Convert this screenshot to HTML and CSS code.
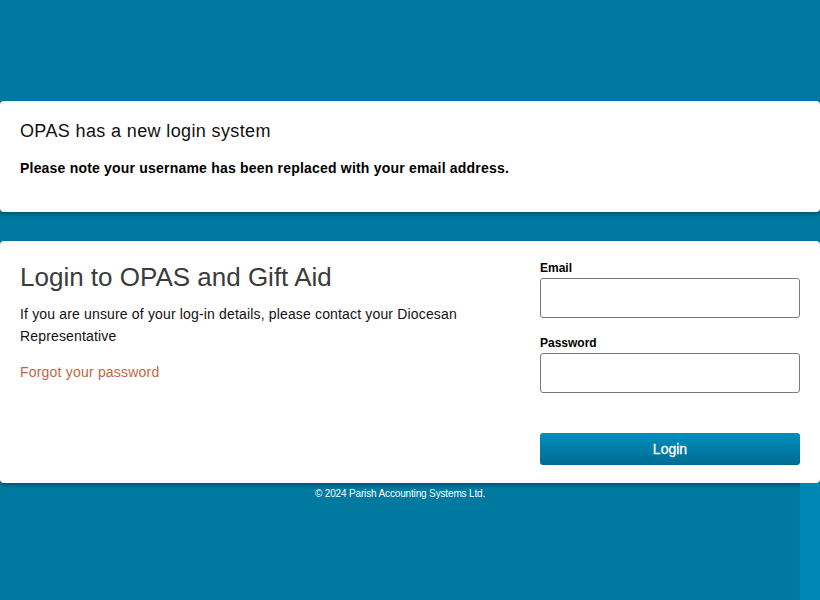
FILE: index.html
```html
<!DOCTYPE html>
<html lang="en">
<head>
<meta charset="utf-8">
<title>OPAS Login</title>
<link rel="stylesheet" href="styles.css">
</head>
<body>
<div class="page">
  <section class="card notice">
    <h2 class="notice-title">OPAS has a new login system</h2>
    <p class="notice-text">Please note your username has been replaced with your email address.</p>
  </section>
  <section class="card login">
    <div class="login-info">
      <h1 class="login-title">Login to OPAS and Gift Aid</h1>
      <p class="login-text">If you are unsure of your log-in details, please contact your Diocesan Representative</p>
      <a class="forgot" href="#">Forgot your password</a>
    </div>
    <form class="login-form">
      <label class="field-label" for="email">Email</label>
      <input class="field-input" id="email" type="email">
      <label class="field-label pw" for="password">Password</label>
      <input class="field-input" id="password" type="password">
      <button class="login-btn" type="button">Login</button>
    </form>
  </section>
  <div class="bottom">
    <footer class="footer">© 2024 Parish Accounting Systems Ltd.</footer>
    <div class="strip"></div>
  </div>
</div>
</body>
</html>
```

FILE: styles.css
```css
html, body {
  margin: 0;
  padding: 0;
  height: 100%;
}
body {
  background: #0079a1;
  font-family: "Liberation Sans", Arial, sans-serif;
  color: #000;
}
.page {
  display: flex;
  flex-direction: column;
  min-height: 100%;
  padding-top: 101px;
  box-sizing: border-box;
}
.card {
  background: #fff;
  border-radius: 4px;
  box-shadow: 0 2px 4px rgba(0, 0, 0, 0.35);
}
.notice {
  padding: 20px 20px 20px;
  height: 111px;
  box-sizing: border-box;
}
.notice-title {
  margin: 0;
  font-size: 18px;
  font-weight: normal;
  line-height: 20px;
  color: #111;
  letter-spacing: 0.37px;
}
.notice-text {
  margin: 19px 0 0;
  font-size: 14px;
  font-weight: bold;
  line-height: 16px;
  letter-spacing: 0.2px;
}
.login {
  margin-top: 29px;
  display: flex;
  padding: 20px 20px 18px;
  height: 242px;
  box-sizing: border-box;
  gap: 20px;
}
.login-info {
  flex: 1;
}
.login-title {
  margin: 0;
  font-size: 26px;
  font-weight: normal;
  line-height: 32px;
  color: #3b3b3b;
}
.login-text {
  margin: 10px 0 0;
  font-size: 14px;
  line-height: 22px;
  color: #111;
  letter-spacing: 0.16px;
}
.forgot {
  display: inline-block;
  margin-top: 14px;
  font-size: 14px;
  line-height: 22px;
  color: #c4673f;
  text-decoration: none;
  letter-spacing: 0.2px;
}
.login-form {
  width: 260px;
  display: flex;
  flex-direction: column;
}
.field-label {
  font-size: 12px;
  font-weight: bold;
  line-height: 14px;
  margin-bottom: 3px;
}
.field-label.pw {
  margin-top: 18px;
}
.field-input {
  height: 40px;
  box-sizing: border-box;
  border: 1px solid #7a7a7a;
  border-radius: 3px;
  margin: 0;
  font-size: 14px;
  padding: 0 8px;
}
.login-btn {
  margin-top: 40px;
  height: 32px;
  border: none;
  border-radius: 3px;
  background: linear-gradient(#008fbd, #006b92);
  color: #fff;
  font-family: "Liberation Sans", Arial, sans-serif;
  font-size: 14px;
  font-weight: normal;
  -webkit-text-stroke: 0.3px #fff;
  cursor: pointer;
}
.bottom {
  flex: 1;
  display: flex;
}
.footer {
  width: 800px;
  text-align: center;
  color: #fff;
  font-size: 10px;
  padding-top: 5px;
  letter-spacing: -0.15px;
}
.strip {
  width: 20px;
  background: #0087b4;
}
```
